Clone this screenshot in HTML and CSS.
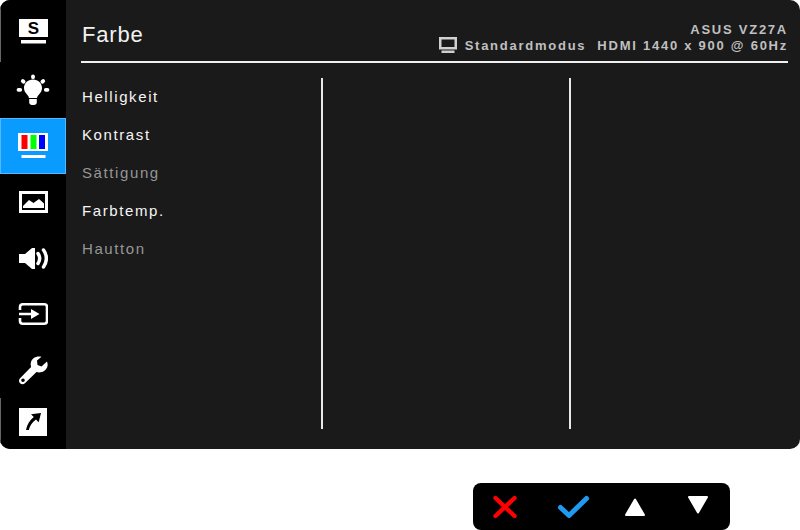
FILE: index.html
```html
<!DOCTYPE html>
<html lang="de">
<head>
<meta charset="utf-8">
<title>Farbe</title>
<link rel="stylesheet" href="styles.css">
</head>
<body>
<div class="panel">
  <nav class="sidebar">
    <div class="nav-item nav-first">
      <svg width="30" height="25" viewBox="0 0 30 25"><path fill="#fff" d="M0 0h29v18H0z"/><path fill="#fff" d="M2 21h25v3.500H2z"/><text x="14.500" y="15" text-anchor="middle" class="s-glyph">S</text></svg>
    </div>
    <div class="nav-item">
      <svg width="34" height="32" viewBox="0 0 34 32"><path fill="#fff" d="M17 5.500c-5.200 0-9 3.700-9 8.500 0 3 1.500 4.800 2.800 6.200 1.200 1.300 1.900 2.300 2.200 3.800h8c.3-1.500 1-2.500 2.200-3.800C24.500 18.800 26 17 26 14c0-4.800-3.800-8.500-9-8.500zM13.200 25h7.600v3.200c0 1.700-1.200 2.800-2.800 2.800h-2c-1.600 0-2.800-1.100-2.800-2.800z"/><g stroke="#fff" stroke-width="3.800" stroke-linecap="round"><path d="M17 2.300v.9M6.800 7l.8.7M27.200 7l-.8.7M2.500 15.800h1.700M29.800 15.800h1.700"/></g></svg>
    </div>
    <div class="nav-item nav-active">
      <svg width="30" height="26" viewBox="0 0 30 26"><path fill="#fff" d="M0 0h30v18H0z"/><path fill="#f00" d="M3.500 2h6v14h-6z"/><path fill="#0f0" d="M12.500 2h6v14h-6z"/><path fill="#00f" d="M21 2h6v14h-6z"/><path fill="#fff" d="M3.500 22h24v3h-24z"/></svg>
    </div>
    <div class="nav-item">
      <svg width="29" height="22" viewBox="0 0 29 22"><path fill="#fff" d="M0 0h29v22H0z"/><path fill="#000" d="M3 3h23v16H3z"/><path fill="#fff" d="M4 17v-2l6-6 4.500 3L20 8l5 4.500V17z"/></svg>
    </div>
    <div class="nav-item">
      <svg width="29" height="21" viewBox="0 0 29 21"><path fill="#fff" d="M0 6h6l7-6h3v21h-3l-7-6H0z"/><path fill="none" stroke="#fff" stroke-width="3.500" stroke-linecap="round" d="M19 5.500c2 3 2 7 0 10M24.500 2c3.800 5 3.800 12 0 17"/></svg>
    </div>
    <div class="nav-item">
      <svg width="30" height="22" viewBox="0 0 30 22"><path fill="none" stroke="#fff" stroke-width="2.600" d="M2 7V4c0-1.700 1-2.700 2.700-2.700h21.600c1.700 0 2.700 1 2.700 2.700v14c0 1.700-1 2.700-2.700 2.700H4.700C3 20.700 2 19.700 2 18v-3"/><path fill="#fff" d="M1 9.700h12V6l8.500 5-8.500 5v-3.700H1z"/></svg>
    </div>
    <div class="nav-item">
      <svg width="29" height="29" viewBox="0 0 29 29"><path fill="#fff" d="M28 5.500 22.500 10.500 18.500 9l-.5-4.500L22.500 0.800C18 -.5 13.200 1.700 12 6c-.5 1.700-.4 3.400.1 5L1.300 22c-1.700 1.700-1.700 3.800-.2 5.200 1.500 1.500 3.500 1.400 5.100-.2L17.500 16c4.800 1.500 10-1.300 11-6 .3-1.600 0-3.200-.5-4.500zM4 26a1.800 1.800 0 1 1 0-3.600A1.800 1.800 0 0 1 4 26z"/></svg>
    </div>
    <div class="nav-item nav-last">
      <svg width="28" height="28" viewBox="0 0 28 28"><path fill="#fff" d="M0 0h28v28H0z"/><path fill="#000" d="M22 5l-10 1.300 2.800 2.700C11 12 8 16.500 7 22h2.800c1-4 3.300-7.600 7.200-10.400l2.700 2.700z"/></svg>
    </div>
  </nav>
  <main class="content">
    <header class="header">
      <h1 class="title">Farbe</h1>
      <div class="status">
        <div class="model">ASUS VZ27A</div>
        <div class="mode">
          <svg class="mode-icon" width="18" height="16" viewBox="0 0 18 16"><path fill="#d0d0d0" fill-rule="evenodd" d="M0 0h18v12.500H0zM2.500 2.500v7.500h13V2.500zM2.500 13.500h13V16h-13z"/></svg>
          <span class="mode-name">Standardmodus</span>
          <span>HDMI 1440 x 900 @ 60Hz</span>
        </div>
      </div>
    </header>
    <div class="columns">
      <ul class="menu">
        <li class="on">Helligkeit</li>
        <li class="on">Kontrast</li>
        <li class="off">Sättigung</li>
        <li class="on">Farbtemp.</li>
        <li class="off">Hautton</li>
      </ul>
      <div class="col"></div>
      <div class="col"></div>
    </div>
  </main>
</div>
<div class="keys">
  <svg class="key key-x" width="26" height="24" viewBox="0 0 26 24"><path stroke="#f00" stroke-width="4.400" stroke-linecap="round" d="M3.500 3l19 18M22.500 3l-19 18"/></svg>
  <svg class="key key-ok" width="33" height="24" viewBox="0 0 33 24"><path fill="none" stroke="#1e9bf0" stroke-width="5" stroke-linecap="round" stroke-linejoin="round" d="M3.500 12.500l8.500 8L29.500 3.500"/></svg>
  <svg class="key key-up" width="20" height="18" viewBox="0 0 20 18"><path fill="#fff" stroke="#fff" stroke-width="2" stroke-linejoin="round" d="M10 1.500 1 17h18z"/></svg>
  <svg class="key key-down" width="20" height="18" viewBox="0 0 20 18"><path fill="#fff" stroke="#fff" stroke-width="2" stroke-linejoin="round" d="M10 16.500 1 1h18z"/></svg>
</div>
</body>
</html>
```
FILE: styles.css
```css
* { box-sizing: border-box; }
html, body { margin: 0; padding: 0; background: #fff; }
body { width: 800px; height: 530px; overflow: hidden; font-family: "Liberation Sans", Arial, sans-serif; }
.panel { display: flex; width: 800px; height: 449px; background: #1a1a1a; border-radius: 10px; overflow: hidden; }
.sidebar { display: flex; flex-direction: column; flex: 0 0 66px; background: #000; }
.nav-item { display: flex; align-items: center; justify-content: center; height: 56px; flex: none; }
.nav-first { height: 62px; padding: 1px 0 0 2px; box-shadow: inset 1px 0 0 #666; }
.nav-active { height: 56px; background: #0a9bff; box-shadow: inset 0 0 0 1px #52b8ff; }
.nav-last { flex: 1; height: auto; padding-bottom: 3px; box-shadow: inset 1px 0 0 #666; }
.s-glyph { font: bold 17px "Liberation Sans", sans-serif; fill: #000; }
.content { flex: 1; min-width: 0; padding: 0 12px 0 16px; display: flex; flex-direction: column; }
.header { display: flex; justify-content: space-between; align-items: flex-end; height: 63px; margin-left: -1px; padding-left: 1px; border-bottom: 2px solid #f0f0f0; padding-bottom: 8px; }
.title { margin: 0 0 5px; font-size: 22px; font-weight: 400; letter-spacing: .8px; color: #f2f2f2; }
.status { color: #c0c0c0; font-size: 13px; font-weight: 700; letter-spacing: 1.75px; line-height: 15px; text-align: right; }
.mode { display: flex; align-items: center; justify-content: flex-end; }
.mode-icon { margin-right: 8px; }
.mode-name { margin-right: 11px; }
.columns { display: flex; padding-top: 15px; flex: 1; padding-bottom: 20px; }
.menu { list-style: none; margin: 0; padding: 0; flex: 0 0 239px; }
.menu li { height: 38px; font-size: 15px; line-height: 38px; letter-spacing: 1.6px; }
.menu .on { color: #f5f5f5; }
.menu .off { color: #969696; }
.col { flex: 0 0 248px; border-left: 2px solid #e8e8e8; }
.keys { display: flex; align-items: center; width: 257px; height: 47px; margin: 34px 0 0 473px; padding-left: 19px; background: #000; border-radius: 8px; }
.key-ok { margin-left: 39px; }
.key-up { margin-left: 35px; }
.key-down { margin-left: 43px; margin-bottom: 3px; }
```
